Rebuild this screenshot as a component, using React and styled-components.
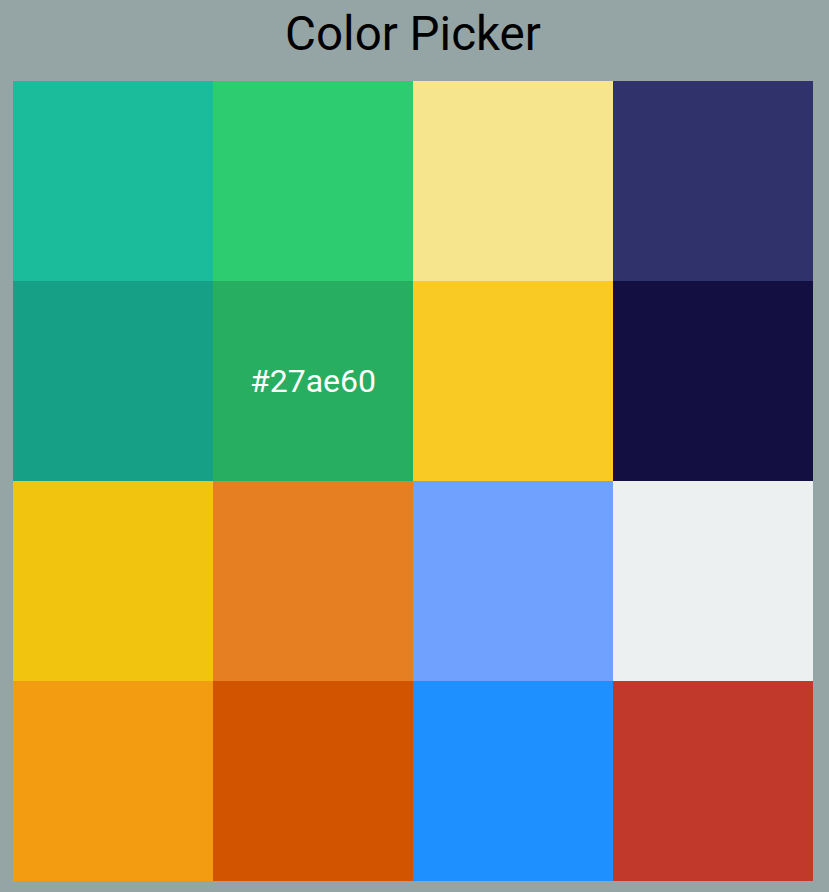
import React from 'react'
import styled, { createGlobalStyle } from 'styled-components'

const colors = [
  '#1abc9c', '#2ecc71', '#f6e58d', '#30336b',
  '#16a085', '#27ae60', '#f9ca24', '#130f40',
  '#f1c40f', '#e67e22', '#70a1ff', '#ecf0f1',
  '#f39c12', '#d35400', '#1e90ff', '#c0392b'
]

const GlobalStyle = createGlobalStyle`
  html, body {
    margin: 0;
    background: #95a5a6;
    font-family: Roboto, 'Liberation Sans', sans-serif;
  }
`

const Page = styled.div`
  width: 800px;
  padding: 0 13px;
`

const Title = styled.h1`
  margin: 0;
  height: 81px;
  display: flex;
  align-items: center;
  justify-content: center;
  padding-bottom: 14px;
  box-sizing: border-box;
  font-size: 47.5px;
  font-weight: 400;
  color: #000;
`

const Grid = styled.div`
  display: grid;
  grid-template-columns: repeat(4, 200px);
  grid-auto-rows: 200px;
`

const Swatch = styled.div`
  background: ${p => p.color};
  display: flex;
  align-items: center;
  justify-content: center;
  color: #fff;
  font-size: 32px;
`

const App = () => (
  <Page>
    <GlobalStyle />
    <Title>Color Picker</Title>
    <Grid>
      {colors.map(c => (
        <Swatch key={c} color={c}>
          {c === '#27ae60' ? c : null}
        </Swatch>
      ))}
    </Grid>
  </Page>
)

export default App
